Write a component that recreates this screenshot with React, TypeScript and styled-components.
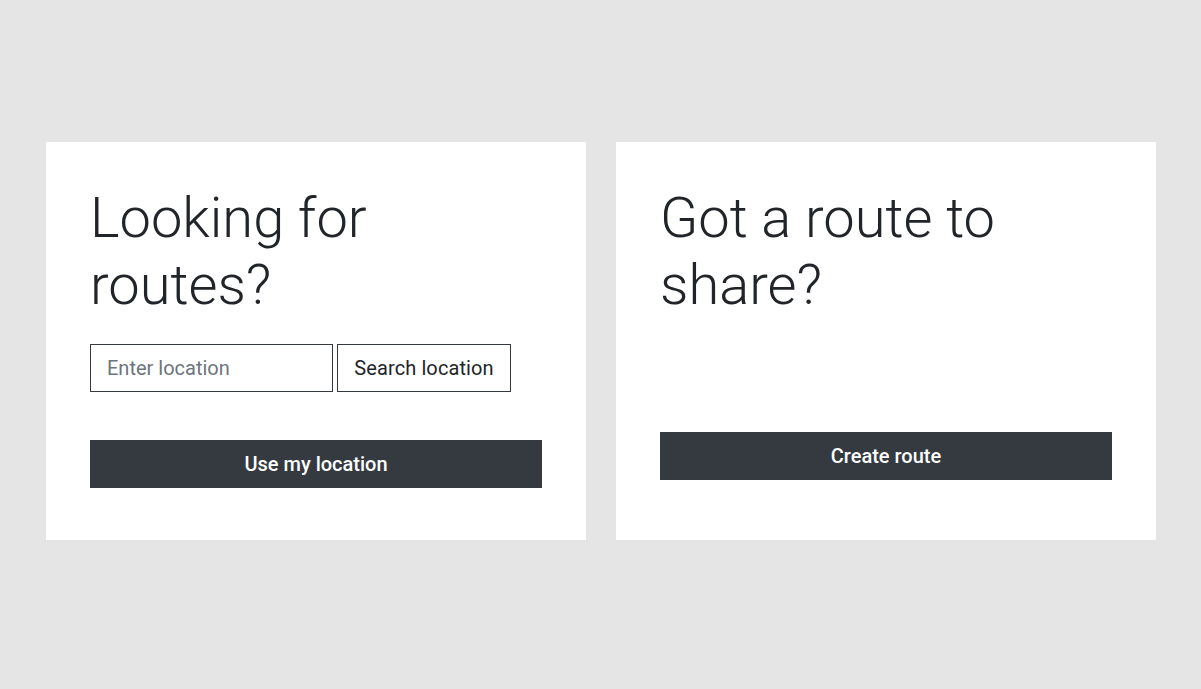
import React from "react";
import styled, { createGlobalStyle } from "styled-components";

const GlobalStyle = createGlobalStyle`
  * { box-sizing: border-box; }
  html, body {
    margin: 0;
    padding: 0;
    background: #e5e5e5;
    font-family: Roboto, "Liberation Sans", sans-serif;
    color: #212529;
  }
`;

const Page = styled.main`
  display: flex;
  gap: 30px;
  padding: 142px 45px 0 46px;
  align-items: stretch;
`;

const Card = styled.section`
  flex: 1 1 0;
  background: #ffffff;
  padding: 43px 44px 52px;
  display: flex;
  flex-direction: column;
  align-items: stretch;
`;

const Heading = styled.h1`
  margin: 0;
  font-size: 56px;
  font-weight: 300;
  line-height: 1.2;
  color: #212529;
`;

const SearchRow = styled.form`
  display: flex;
  gap: 4px;
  margin-top: 25px;
`;

const Input = styled.input`
  width: 243px;
  height: 48px;
  padding: 8px 16px;
  border: 1px solid #343a40;
  border-radius: 0;
  font-family: inherit;
  font-size: 20px;
  line-height: 1.5;
  color: #495057;
  background: #fff;
  outline: none;
  &::placeholder { color: #6c757d; }
`;

const OutlineButton = styled.button`
  width: 174px;
  height: 48px;
  padding: 8px 0;
  border: 1px solid #343a40;
  border-radius: 0;
  background: #fff;
  color: #212529;
  font-family: inherit;
  font-size: 20px;
  line-height: 1.5;
  letter-spacing: 0.1px;
  cursor: pointer;
`;

const DarkButton = styled.button<{ $top: number }>`
  margin-top: ${(p) => p.$top}px;
  height: 48px;
  width: 100%;
  padding: 8px 16px;
  border: 1px solid #343a40;
  border-radius: 0;
  background: #343a40;
  color: #fff;
  font-family: inherit;
  font-size: 20px;
  font-weight: 500;
  line-height: 1.5;
  cursor: pointer;
`;

export default function App() {
  return (
    <>
      <GlobalStyle />
      <Page>
        <Card>
          <Heading>
            Looking for
            <br />
            routes?
          </Heading>
          <SearchRow onSubmit={(e) => e.preventDefault()}>
            <Input type="text" placeholder="Enter location" />
            <OutlineButton type="submit">Search location</OutlineButton>
          </SearchRow>
          <DarkButton $top={48}>Use my location</DarkButton>
        </Card>
        <Card>
          <Heading>
            Got a route to
            <br />
            share?
          </Heading>
          <DarkButton $top={113}>Create route</DarkButton>
        </Card>
      </Page>
    </>
  );
}
